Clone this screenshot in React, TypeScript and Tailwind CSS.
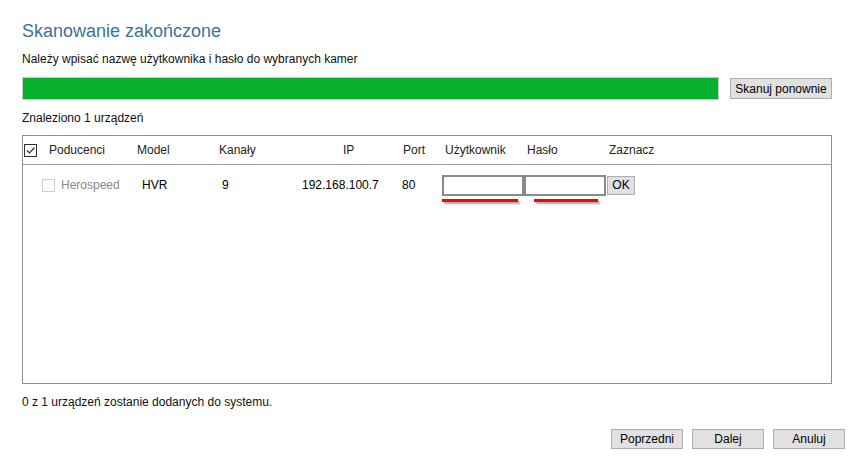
import React from "react";

const font = { fontFamily: '"Liberation Sans", Arial, sans-serif' };

function Btn({ children, className = "" }: { children: React.ReactNode; className?: string }) {
  return (
    <button
      className={
        "h-[20px] border border-[#adadad] bg-[#e1e1e1] text-[12px] leading-[18px] text-black px-0 whitespace-nowrap " +
        className
      }
    >
      {children}
    </button>
  );
}

export default function App() {
  return (
    <div
      className="w-[855px] h-[459px] bg-white text-[12px] text-[#111] relative overflow-hidden"
      style={font}
    >
      <div className="pl-[22px] pt-[20px]">
        <div className="text-[18px] leading-[22px] text-[#41709b]">Skanowanie zakończone</div>
        <div className="mt-[10px] leading-[14px]">Należy wpisać nazwę użytkownika i hasło do wybranych kamer</div>
        <div className="mt-[11px] flex items-center">
          <div className="w-[697px] h-[23px] border border-[#c8c8c8] bg-[#06b02c]" />
          <Btn className="ml-[11px] w-[102px] h-[21px]">Skanuj ponownie</Btn>
        </div>
        <div className="mt-[11px] leading-[14px]">Znaleziono 1 urządzeń</div>

        <div className="mt-[10px] w-[810px] h-[249px] border border-[#8e8e8e]">
          <div className="h-[29px] flex items-center border-b border-[#9a9a9a] text-[#222]">
            <div className="ml-[1px] w-[25px] flex">
              <div className="w-[13px] h-[13px] border border-[#333] bg-white flex items-center justify-center">
                <svg width="11" height="11" viewBox="0 0 11 11">
                  <path d="M2 5.5 L4.5 8 L9.5 2.5" fill="none" stroke="#333" strokeWidth="1.2" />
                </svg>
              </div>
            </div>
            <div className="w-[88px]">Poducenci</div>
            <div className="w-[82px]">Model</div>
            <div className="w-[124px]">Kanały</div>
            <div className="w-[60px]">IP</div>
            <div className="w-[42px]">Port</div>
            <div className="w-[82px]">Użytkownik</div>
            <div className="w-[82px]">Hasło</div>
            <div>Zaznacz</div>
          </div>
          <div className="h-[40px] flex items-center text-black">
            <div className="ml-[19px] w-[13px] h-[13px] border border-[#cfcfcf] bg-white" />
            <div className="ml-[6px] w-[81px] text-[#888]">Herospeed</div>
            <div className="w-[80px]">HVR</div>
            <div className="w-[80px]">9</div>
            <div className="w-[100px]">192.168.100.7</div>
            <div className="w-[40px]">80</div>
            <div className="relative w-[82px] h-[21px] border-2 border-[#8a8a8a] bg-white">
              <div className="absolute left-[-2px] top-[22px] w-[76px] h-[3px] bg-[#ff0000] shadow-[2px_2px_2px_rgba(0,0,0,0.35)]" />
            </div>
            <div className="relative w-[82px] h-[21px] border-2 border-[#8a8a8a] bg-white">
              <div className="absolute left-[8px] top-[22px] w-[64px] h-[3px] bg-[#ff0000] shadow-[2px_2px_2px_rgba(0,0,0,0.35)]" />
            </div>
            <button className="ml-[1px] w-[28px] h-[19px] border border-[#adadad] bg-[#e1e1e1] text-[12px] leading-[17px] text-black">
              OK
            </button>
          </div>
        </div>

        <div className="mt-[11px] leading-[14px]">0 z 1 urządzeń zostanie dodanych do systemu.</div>
      </div>
      <div className="absolute right-[10px] bottom-[10px] flex gap-[9px]">
        <Btn className="w-[72px]">Poprzedni</Btn>
        <Btn className="w-[72px]">Dalej</Btn>
        <Btn className="w-[72px]">Anuluj</Btn>
      </div>
    </div>
  );
}
